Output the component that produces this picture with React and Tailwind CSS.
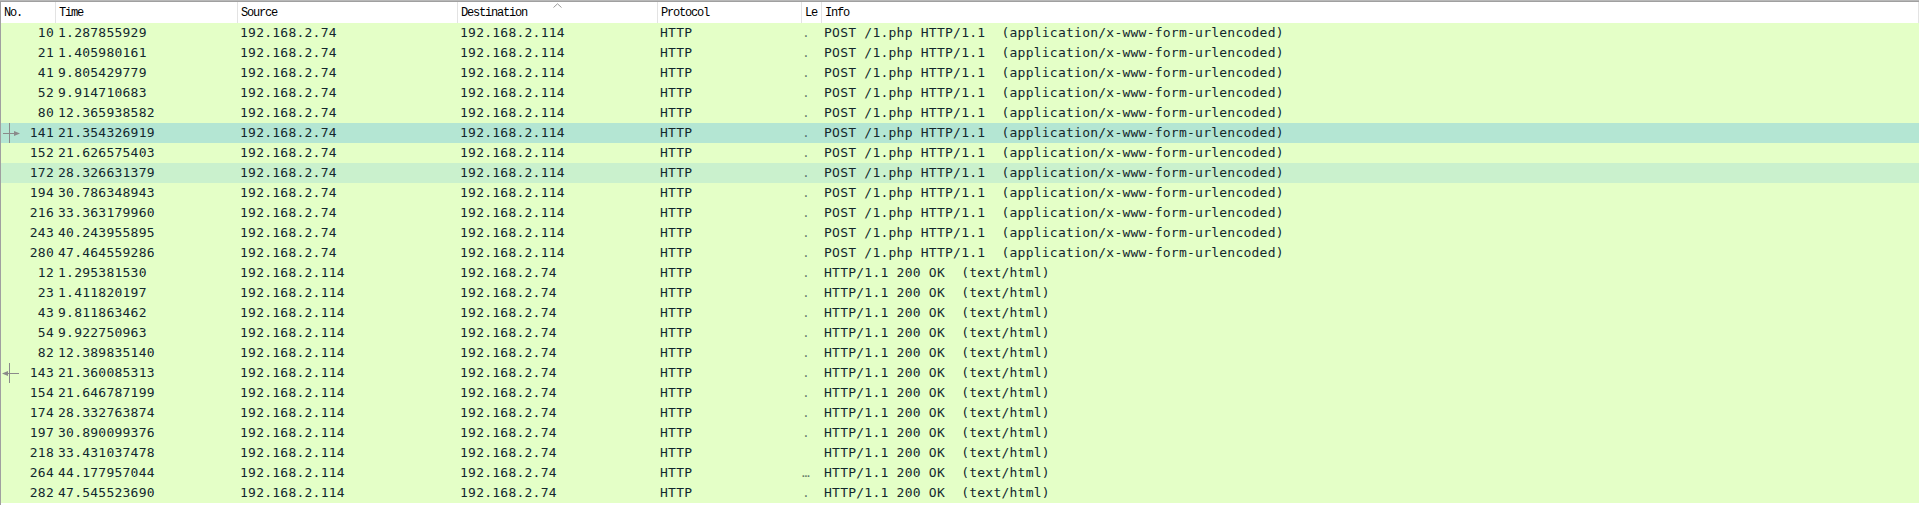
const POST = 'POST /1.php HTTP/1.1  (application/x-www-form-urlencoded)';
const RESP = 'HTTP/1.1 200 OK  (text/html)';

const packets = [
  ['10', '1.287855929', 'req'],
  ['21', '1.405980161', 'req'],
  ['41', '9.805429779', 'req'],
  ['52', '9.914710683', 'req'],
  ['80', '12.365938582', 'req'],
  ['141', '21.354326919', 'req', 'sel', 'out'],
  ['152', '21.626575403', 'req'],
  ['172', '28.326631379', 'req', 'rel'],
  ['194', '30.786348943', 'req'],
  ['216', '33.363179960', 'req'],
  ['243', '40.243955895', 'req'],
  ['280', '47.464559286', 'req'],
  ['12', '1.295381530', 'resp'],
  ['23', '1.411820197', 'resp'],
  ['43', '9.811863462', 'resp'],
  ['54', '9.922750963', 'resp'],
  ['82', '12.389835140', 'resp'],
  ['143', '21.360085313', 'resp', null, 'in'],
  ['154', '21.646787199', 'resp'],
  ['174', '28.332763874', 'resp'],
  ['197', '30.890099376', 'resp'],
  ['218', '33.431037478', 'resp', null, null, ''],
  ['264', '44.177957044', 'resp', null, null, '…'],
  ['282', '47.545523690', 'resp'],
];

function RelatedMark({ dir }) {
  return (
    <svg className="absolute left-0 top-0" width="22" height="20" viewBox="0 0 22 20">
      <line x1="8.5" y1="0" x2="8.5" y2="20" stroke="#8a8a8a" strokeWidth="1" />
      {dir === 'out' ? (
        <>
          <line x1="2" y1="10.5" x2="14" y2="10.5" stroke="#8a8a8a" strokeWidth="1" />
          <polygon points="13,8 19,10.5 13,13" fill="#8a8a8a" />
        </>
      ) : (
        <>
          <line x1="6" y1="10.5" x2="18" y2="10.5" stroke="#8a8a8a" strokeWidth="1" />
          <polygon points="7,8 1,10.5 7,13" fill="#8a8a8a" />
        </>
      )}
    </svg>
  );
}

function Row({ p }) {
  const [no, time, kind, state, mark, le] = p;
  const isReq = kind === 'req';
  const bg =
    state === 'sel' ? 'bg-[#b4e6d3]' : state === 'rel' ? 'bg-[#caf1cd]' : 'bg-[#e4ffc7]';
  return (
    <div className={`grid grid-cols-[54px_182px_220px_200px_144px_20px_1fr] h-[20px] leading-[20px] ${bg}`}>
      <div className="relative pr-[1px] text-right">
        {mark && <RelatedMark dir={mark} />}
        {no}
      </div>
      <div className="pl-[3px]">{time}</div>
      <div className="pl-[3px]">{isReq ? '192.168.2.74' : '192.168.2.114'}</div>
      <div className="pl-[3px]">{isReq ? '192.168.2.114' : '192.168.2.74'}</div>
      <div className="pl-[3px]">HTTP</div>
      <div className="pl-[1px] overflow-hidden text-[#12272e]/60">{le === undefined ? '.' : le}</div>
      <div className="pl-[3px] whitespace-pre">{isReq ? POST : RESP}</div>
    </div>
  );
}

const headers = ['No.', 'Time', 'Source', 'Destination', 'Protocol', 'Le', 'Info'];

export default function App() {
  return (
    <div className="w-[1919px] h-[505px] bg-white border-t border-[#b8b8b8] overflow-hidden">
      <div className="h-[504px] border-l border-t border-[#a0a0a0]">
        {/* Column header */}
        <div className="grid grid-cols-[54px_182px_220px_200px_144px_20px_1fr] h-[21px] border-r border-[#e3e3e3] bg-white text-black font-['Liberation_Mono',monospace] text-[12px] tracking-[-1.2px]">
          {headers.map((h, i) => (
            <div
              key={h}
              className={`relative flex items-center pl-[3px] ${i > 0 ? 'border-l border-[#e3e3e3]' : ''}`}
            >
              {h}
              {h === 'Destination' && (
                <svg className="absolute left-[95px] top-[1px]" width="9" height="5" viewBox="0 0 9 5">
                  <polyline points="0.5,4.5 4.5,0.8 8.5,4.5" fill="none" stroke="#9a9a9a" strokeWidth="1" />
                </svg>
              )}
            </div>
          ))}
        </div>

        {/* Packet rows */}
        <div className="font-['DejaVu_Sans_Mono',monospace] text-[13px] tracking-[0.24px] text-[#12272e]">
          {packets.map((p) => (
            <Row key={p[0]} p={p} />
          ))}
        </div>
      </div>
    </div>
  );
}
